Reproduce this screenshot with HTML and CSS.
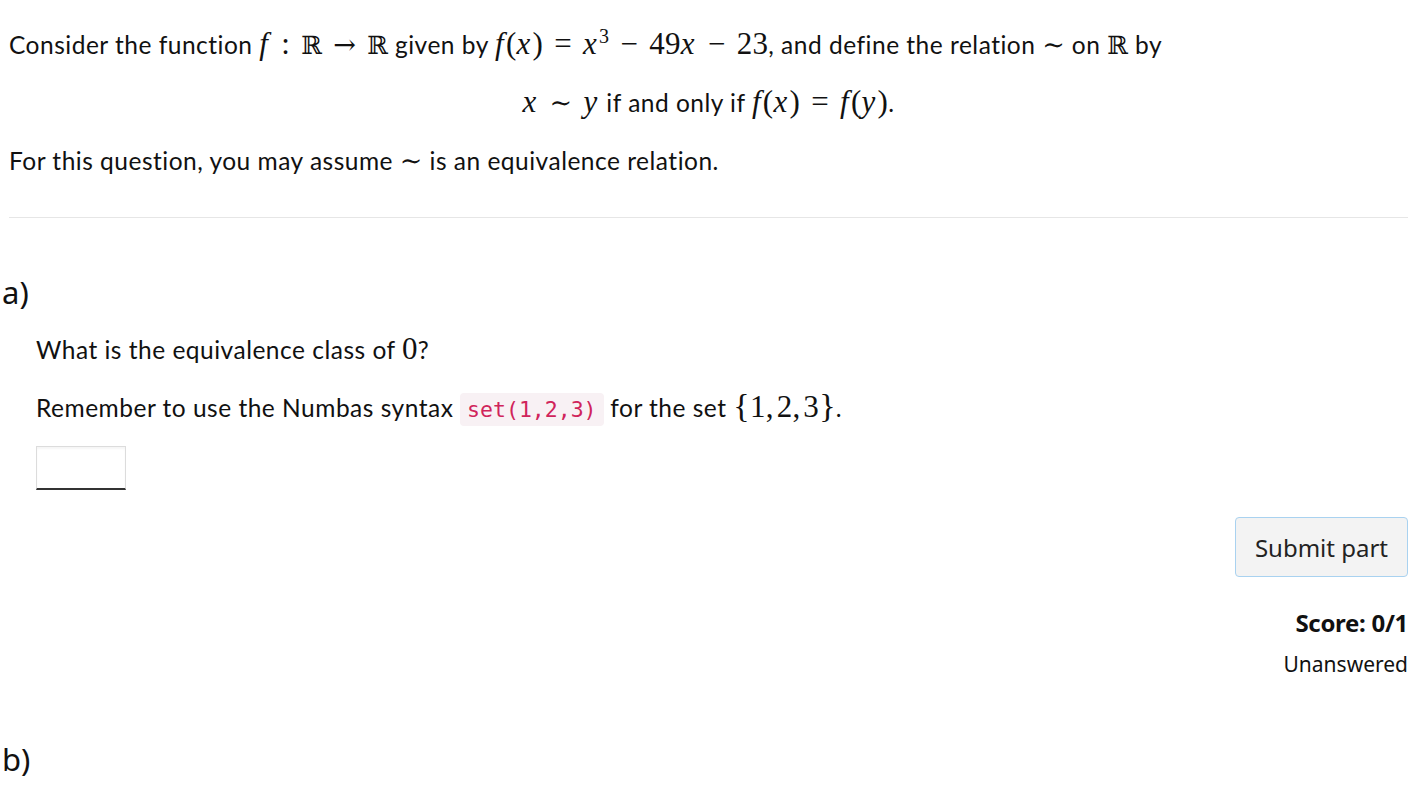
FILE: index.html
```html
<!DOCTYPE html>
<html lang="en">
<head>
<meta charset="utf-8">
<title>Question</title>
<link rel="stylesheet" href="styles.css">
</head>
<body>
<div class="page">
  <div class="statement">
    <p class="line">Consider the function <span class="m"><i>f</i><span class="rel">:</span><span class="bb">ℝ</span><span class="rel arr">→</span><span class="bb">ℝ</span></span> given by <span class="m"><i>f</i>(<i>x</i>)<span class="rel">=</span><i>x</i><sup>3</sup><span class="bin">−</span>49<i>x</i><span class="bin">−</span>23</span>, and define the relation <span class="m"><span class="sim">∼</span></span> on <span class="m"><span class="bb">ℝ</span></span> by</p>
    <p class="display"><span class="m"><i>x</i><span class="rel sim">∼</span><i>y</i></span> if and only if <span class="m"><i>f</i>(<i>x</i>)<span class="rel">=</span><i>f</i>(<i>y</i>)</span>.</p>
    <p class="line">For this question, you may assume <span class="m"><span class="sim">∼</span></span> is an equivalence relation.</p>
  </div>
  <hr class="divider">
  <section class="part">
    <h3 class="part-label">a)</h3>
    <div class="part-body">
      <p class="line">What is the equivalence class of <span class="m">0</span>?</p>
      <p class="line hint">Remember to use the Numbas syntax <code class="code">set(1,2,3)</code> for the set <span class="m"><span class="brace">{</span>1,&#8202;2,&#8202;3<span class="brace">}</span></span>.</p>
      <input class="answer" type="text" aria-label="Answer">
    </div>
    <div class="part-footer">
      <button class="submit" type="button">Submit part</button>
      <div class="score">Score: 0/1</div>
      <div class="status">Unanswered</div>
    </div>
  </section>
  <section class="part">
    <h3 class="part-label part-label-b">b)</h3>
  </section>
</div>
</body>
</html>
```
FILE: styles.css
```css
html, body {
  margin: 0;
  padding: 0;
  background: #fff;
}
body {
  font-family: Lato, "Noto Sans", sans-serif;
  font-size: 24.5px;
  color: #111;
}
.page {
  padding: 0 12px 0 9px;
}
.statement {
  padding-top: 28px;
}
.line {
  margin: 0 0 24px 0;
  line-height: 34px;
  letter-spacing: 0.5px;
}
.display {
  margin: 0 0 24px 0;
  line-height: 34px;
  text-align: center;
  letter-spacing: 0.5px;
}
.m {
  font-family: "Liberation Serif", "DejaVu Serif", serif;
  font-size: 31px;
  line-height: 20px;
  letter-spacing: 0.3px;
}
.m i {
  font-style: italic;
  padding-right: 2px;
}
.m sup {
  font-size: 20px;
  line-height: 0;
}
.rel {
  font-style: normal;
  padding: 0 11px;
}
.bin {
  font-style: normal;
  padding: 0 11px;
}
.sim {
  font-family: "DejaVu Serif", serif;
  font-size: 27px;
}
.arr {
  font-family: "DejaVu Serif", serif;
  font-size: 27px;
}
.bb {
  font-family: "DejaVu Serif", serif;
  font-size: 25px;
}
.brace {
  font-size: 34px;
}
.divider {
  border: 0;
  border-top: 1px solid #e6e6e6;
  margin: 39px 0 0 0;
}
.part {
  margin-left: -7px;
}
.part-label {
  font-family: "Noto Sans", sans-serif;
  font-weight: 400;
  font-size: 31px;
  margin: 52px 0 0 0;
  line-height: 44px;
}
.part-label-b {
  margin-top: 58px;
}
.part-body {
  padding-left: 34px;
  padding-top: 19px;
}
.hint {
  margin-bottom: 19px;
}
.code {
  font-family: "DejaVu Sans Mono", monospace;
  font-size: 21.5px;
  color: #d0245b;
  background: #f8f1f4;
  border-radius: 4px;
  padding: 4px 7px;
  letter-spacing: 0;
}
.answer {
  display: block;
  box-sizing: border-box;
  width: 90px;
  height: 44px;
  border: 1px solid #dcdcdc;
  border-bottom: 2px solid #333;
  margin: 0;
  font-size: 20px;
  box-shadow: inset 0 2px 2px rgba(0,0,0,0.04);
}
.part-footer {
  display: flex;
  flex-direction: column;
  align-items: flex-end;
  margin-top: 27px;
}
.submit {
  font-family: "Noto Sans", sans-serif;
  font-size: 24px;
  color: #222;
  background: #f3f3f3;
  border: 1px solid #a9d2f0;
  border-radius: 4px;
  height: 60px;
  padding: 0 19px;
}
.score {
  font-family: "Noto Sans", sans-serif;
  font-weight: 700;
  font-size: 24px;
  margin-top: 31px;
  line-height: 30px;
  letter-spacing: -0.3px;
}
.status {
  font-family: "Noto Sans", sans-serif;
  font-size: 21px;
  margin-top: 11px;
  line-height: 30px;
}
```
